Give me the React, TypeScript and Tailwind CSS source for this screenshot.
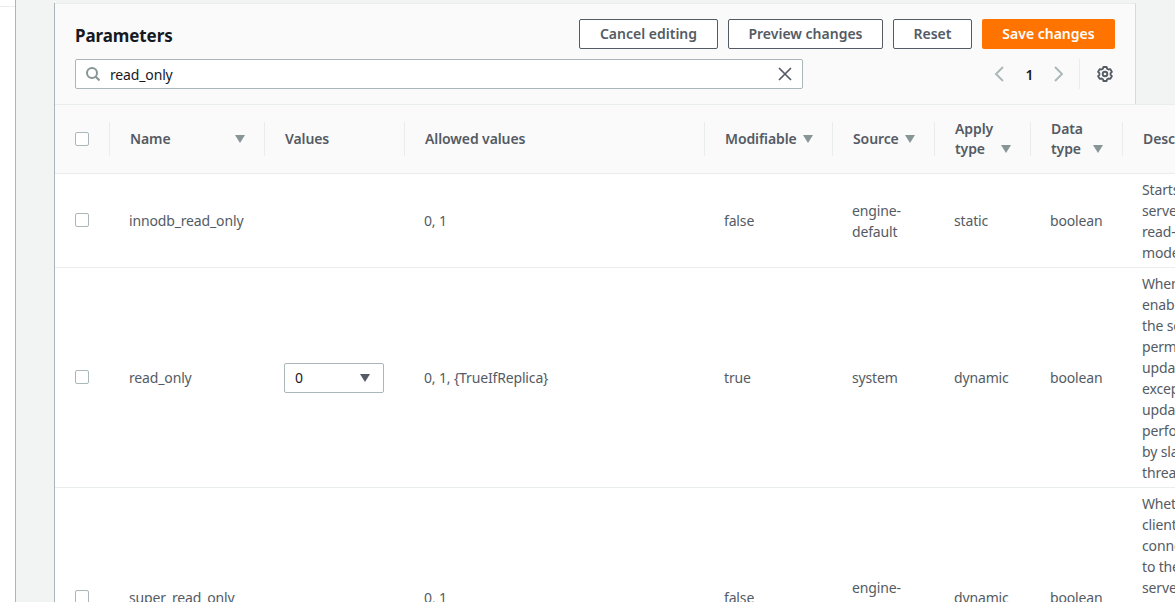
const font = "font-['Noto_Sans','Open_Sans',sans-serif]";
const cols = "grid grid-cols-[54px_155px_140px_300px_128px_102px_96px_92px_200px]";
const btn = "h-[30px] pb-px bg-white border border-[#545b64] rounded-[2px] text-[14px] font-semibold text-[#545b64]";
const plainTh = "h-[34px] border-l border-[#eaeded] pl-5 flex items-center text-[14px] leading-[20px] tracking-[-0.1px] font-semibold text-[#545b64]";

function Caret({ className = "" }: { className?: string }) {
  return (
    <svg width="10" height="8" viewBox="0 0 10 8" className={className}>
      <path d="M0 0h10L5 8z" fill="currentColor" />
    </svg>
  );
}

function Checkbox() {
  return <span className="block -mt-px w-[14px] h-[14px] bg-white border border-[#aab7b8] rounded-[2px]" />;
}

function SearchIcon() {
  return (
    <svg width="14" height="14" viewBox="0 0 14 14" fill="none" stroke="#879596" strokeWidth="2">
      <circle cx="6" cy="6" r="5" />
      <path d="M9.5 9.5L13.5 13.5" />
    </svg>
  );
}

function ClearIcon() {
  return (
    <svg width="14" height="14" viewBox="0 0 14 14" fill="none" stroke="#545b64" strokeWidth="1.7">
      <path d="M1 1l12 12M13 1L1 13" />
    </svg>
  );
}

function Chevron({ left }: { left?: boolean }) {
  return (
    <svg width="10" height="16" viewBox="0 0 10 16" fill="none" stroke="#aab7b8" strokeWidth="1.9">
      <path d={left ? "M9 1L2 8l7 7" : "M1 1l7 7-7 7"} />
    </svg>
  );
}

function Gear() {
  return (
    <svg width="16" height="16" viewBox="0 0 16 16" fill="none" stroke="#545b64" strokeWidth="1.9" strokeLinejoin="round">
      <path d="M6.4 1h3.2l.5 1.7 1.4.8 1.8-.4 1.6 2.8-1.3 1.2v1.8l1.3 1.2-1.6 2.8-1.8-.4-1.4.8-.5 1.7H6.4l-.5-1.7-1.4-.8-1.8.4-1.6-2.8 1.3-1.2V7.1L1.1 5.9l1.6-2.8 1.8.4 1.4-.8z" />
      <circle cx="8" cy="8" r="2.3" />
    </svg>
  );
}

function Th({ lines, caretGap = "justify-start gap-[6px]" }: { lines: string[]; caretGap?: string }) {
  return (
    <div className="h-[34px] border-l border-[#eaeded] pl-5 flex items-center">
      <div className="text-[14px] leading-[20px] tracking-[-0.1px] font-semibold text-[#545b64]">
        {lines.length > 1 && <div>{lines[0]}</div>}
        <div className={`flex items-center ${caretGap}`}>
          {lines[lines.length - 1]}
          <Caret className="text-[#879596]" />
        </div>
      </div>
    </div>
  );
}

type Row = {
  name: string;
  allowed: string;
  modifiable: string;
  source: string[];
  apply: string;
  desc: string[];
  h: string;
  select?: boolean;
};

const rows: Row[] = [
  {
    name: "innodb_read_only",
    allowed: "0, 1",
    modifiable: "false",
    source: ["engine-", "default"],
    apply: "static",
    desc: ["Starts the", "server in", "read-only", "mode."],
    h: "h-[94px]",
  },
  {
    name: "read_only",
    allowed: "0, 1, {TrueIfReplica}",
    modifiable: "true",
    source: ["system"],
    apply: "dynamic",
    desc: ["When", "enabled,", "the server", "permits no", "updates", "except for", "updates", "performed", "by slave", "threads."],
    h: "h-[220px]",
    select: true,
  },
  {
    name: "super_read_only",
    allowed: "0, 1",
    modifiable: "false",
    source: ["engine-", "default"],
    apply: "dynamic",
    desc: ["Whether", "client", "connections", "to the", "server", "can make", "updates", "when", "read_only", "is enabled."],
    h: "h-[220px]",
  },
];

export default function App() {
  return (
    <div className={`w-[1175px] h-[602px] overflow-hidden flex bg-[#f2f3f3] ${font}`}>
      <div className="w-[16px] shrink-0 bg-white border-r border-[#aab7b8]">
        <div className="mt-[6px] h-px bg-[#eaeded]" />
      </div>
      <div className="pl-[38px] pt-[3px]">
        <div className="w-[1082px] border-l border-[#aab7b8]">
          <div className="h-[101px] bg-[#fafafa] border-t border-r border-t-[#eaeded] border-r-[#d5dbdb] pl-5 pr-5">
            <div className="flex items-start justify-between pt-[15px]">
              <h2 className="text-[17px] leading-[33px] tracking-[-0.1px] font-bold text-[#16191f]">Parameters</h2>
              <div className="flex gap-[10px]">
                <button className={`w-[139px] ${btn}`}>Cancel editing</button>
                <button className={`w-[155px] ${btn}`}>Preview changes</button>
                <button className={`w-[79px] ${btn}`}>Reset</button>
                <button className="w-[133px] h-[30px] pb-px bg-[#ff7300] rounded-[2px] text-[14px] font-semibold text-white">Save changes</button>
              </div>
            </div>
            <div className="flex items-center mt-[7px]">
              <div className="w-[728px] h-[30px] bg-white border border-[#aab7b8] rounded-[2px] flex items-center pl-[10px] pr-[10px]">
                <SearchIcon />
                <span className="ml-[10px] flex-1 text-[14px] tracking-[-0.15px] text-[#16191f]">read_only</span>
                <ClearIcon />
              </div>
              <div className="flex-1 flex items-center justify-end">
                <Chevron left />
                <span className="w-[50px] pl-px text-center text-[14px] font-semibold text-[#16191f]">1</span>
                <Chevron />
                <div className="ml-[15px] h-[30px] border-l border-[#eaeded] pl-[17px] pr-[2px] flex items-center">
                  <Gear />
                </div>
              </div>
            </div>
          </div>
          <div className="w-[1267px] bg-white">
            <div className={`${cols} items-center h-[70px] bg-[#fafafa] border-y border-[#eaeded]`}>
              <div className="pl-5"><Checkbox /></div>
              <Th lines={["Name"]} caretGap="justify-between w-[115px]" />
              <div className={plainTh}>Values</div>
              <div className={plainTh}>Allowed values</div>
              <Th lines={["Modifiable"]} />
              <Th lines={["Source"]} />
              <Th lines={["Apply", "type"]} caretGap="justify-between w-[56px]" />
              <Th lines={["Data", "type"]} caretGap="justify-between w-[52px]" />
              <div className={plainTh}>Description</div>
            </div>
            {rows.map((r) => (
              <div key={r.name} className={`${cols} items-center ${r.h} border-b border-[#eaeded] text-[14px] leading-[21px] tracking-[-0.15px] text-[#545b64]`}>
                <div className="pl-5"><Checkbox /></div>
                <div className="pl-5">{r.name}</div>
                <div className="pl-5">
                  {r.select && (
                    <div className="w-[100px] h-[30px] bg-white border border-[#aab7b8] rounded-[2px] flex items-center justify-between pl-[10px] pr-[13px] text-[#16191f]">
                      0
                      <Caret className="text-[#545b64]" />
                    </div>
                  )}
                </div>
                <div className="pl-5">{r.allowed}</div>
                <div className="pl-5">{r.modifiable}</div>
                <div className="pl-5">
                  {r.source.map((s) => (
                    <div key={s}>{s}</div>
                  ))}
                </div>
                <div className="pl-5">{r.apply}</div>
                <div className="pl-5">boolean</div>
                <div className="pl-5">
                  {r.desc.map((d, i) => (
                    <div key={i}>{d}</div>
                  ))}
                </div>
              </div>
            ))}
          </div>
        </div>
      </div>
    </div>
  );
}
